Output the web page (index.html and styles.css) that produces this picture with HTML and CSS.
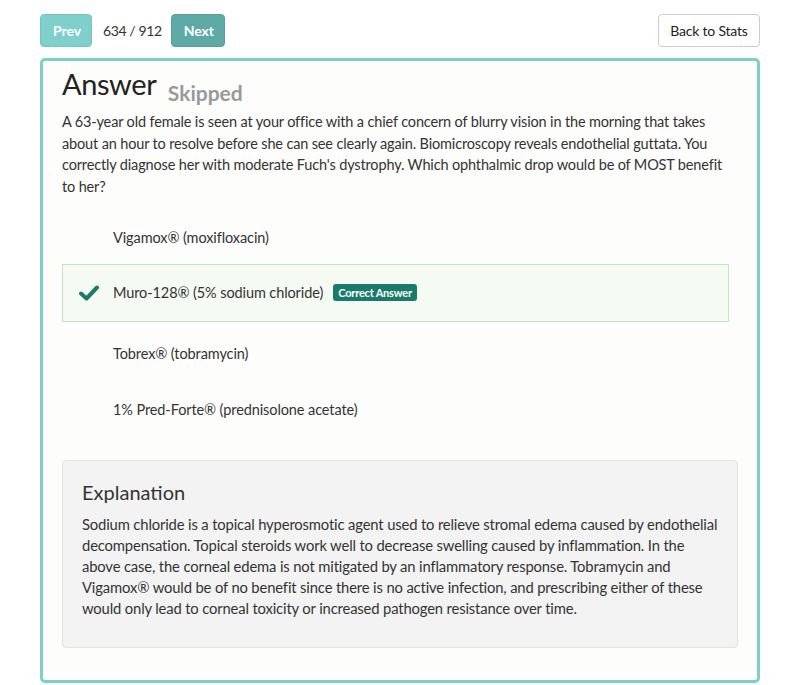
FILE: index.html
```html
<!DOCTYPE html>
<html>
<head>
<meta charset="utf-8">
<link rel="stylesheet" href="styles.css">
</head>
<body>
<div class="page">
  <div class="topbar">
    <div class="nav">
      <button class="btn btn-prev">Prev</button>
      <span class="count">634 / 912</span>
      <button class="btn btn-next">Next</button>
    </div>
    <button class="btn btn-back">Back to Stats</button>
  </div>
  <div class="card">
    <h1 class="title">Answer <small class="status">Skipped</small></h1>
    <p class="question">A 63-year old female is seen at your office with a chief concern of blurry vision in the morning that takes about an hour to resolve before she can see clearly again. Biomicroscopy reveals endothelial guttata. You correctly diagnose her with moderate Fuch's dystrophy. Which ophthalmic drop would be of MOST benefit to her?</p>
    <ul class="options">
      <li class="option"><span class="mark"></span><span class="opt-text">Vigamox® (moxifloxacin)</span></li>
      <li class="option correct"><span class="mark"><svg width="20" height="16" viewBox="0 0 20 16"><polyline points="2,8.5 7.5,13.5 18,2.5" fill="none" stroke="#1b7b6a" stroke-width="4" stroke-linecap="round" stroke-linejoin="round"/></svg></span><span class="opt-text">Muro-128® (5% sodium chloride)</span><span class="badge">Correct Answer</span></li>
      <li class="option"><span class="mark"></span><span class="opt-text">Tobrex® (tobramycin)</span></li>
      <li class="option"><span class="mark"></span><span class="opt-text">1% Pred-Forte® (prednisolone acetate)</span></li>
    </ul>
    <div class="explanation">
      <h2 class="exp-title">Explanation</h2>
      <p class="exp-text">Sodium chloride is a topical hyperosmotic agent used to relieve stromal edema caused by endothelial<br>decompensation. Topical steroids work well to decrease swelling caused by inflammation. In the<br>above case, the corneal edema is not mitigated by an inflammatory response. Tobramycin and<br>Vigamox® would be of no benefit since there is no active infection, and prescribing either of these<br>would only lead to corneal toxicity or increased pathogen resistance over time.</p>
    </div>
  </div>
</div>
</body>
</html>
```

FILE: styles.css
```css
* { box-sizing: border-box; }
html, body { margin: 0; padding: 0; background: #fff; }
body { font-family: Lato, "Open Sans", sans-serif; color: #333; }
.page { padding: 14px 40px 0 40px; }
.topbar { display: flex; justify-content: space-between; align-items: center; height: 33px; }
.nav { display: flex; align-items: center; }
.btn {
  height: 33px; border-radius: 4px; font-family: Lato, sans-serif;
  font-size: 14px; padding: 0 12px; border: 1px solid transparent; cursor: pointer;
}
.btn-prev { background: #7fcfcc; color: #fff; font-weight: bold; width: 52px; border-color: #74c4c1; }
.btn-next { background: #5eaaa6; color: #fff; font-weight: bold; width: 54px; border-color: #579f9b; }
.count { font-size: 14px; color: #333; margin: 0 9px 0 11px; letter-spacing: -0.4px; }
.btn-back { background: #fff; color: #222; border-color: #ccc; width: 102px; padding: 0; letter-spacing: -0.2px; }
.card {
  margin-top: 11px; border: 3px solid #7ecfcb; border-radius: 5px;
  background: #fdfdfb; height: 625px; padding: 5px 19px 0 19px;
}
.title { margin: 0; font-size: 29px; font-weight: 400; line-height: 36px; color: #222; letter-spacing: -0.4px; }
.status { font-size: 21px; font-weight: bold; color: #999; margin-left: 5px; vertical-align: -6px; letter-spacing: 0; }
.question { margin: 0; font-size: 14.5px; line-height: 21.7px; color: #333; letter-spacing: -0.15px; }
.options { list-style: none; margin: 12px 9px 0 0; padding: 0; }
.option {
  display: flex; align-items: center; height: 56px; border: 1px solid transparent;
  padding-left: 16px; font-size: 14.5px; color: #333; letter-spacing: -0.1px;
}
.option.correct { background: #f5faf3; border-color: #c8e2c6; height: 58px; margin: -2px 0 4px 0; }
.mark { width: 20px; margin-right: 14px; display: flex; align-items: center; }
.badge {
  margin-left: 10px; background: #1b7b6a; color: #fff; font-size: 11px; font-weight: bold;
  padding: 2px 5px; border-radius: 3px; line-height: 13px; letter-spacing: -0.2px;
}
.explanation {
  margin-top: 22px; background: #f3f3f3; border: 1px solid #e2e2e2; border-radius: 4px;
  height: 188px; padding: 18px 19px 0 19px;
}
.exp-title { margin: 0; font-size: 20px; font-weight: 400; line-height: 26px; color: #333; }
.exp-text { margin: 9px 0 0 0; font-size: 14.8px; line-height: 21px; color: #333; letter-spacing: -0.15px; white-space: nowrap; }
```
